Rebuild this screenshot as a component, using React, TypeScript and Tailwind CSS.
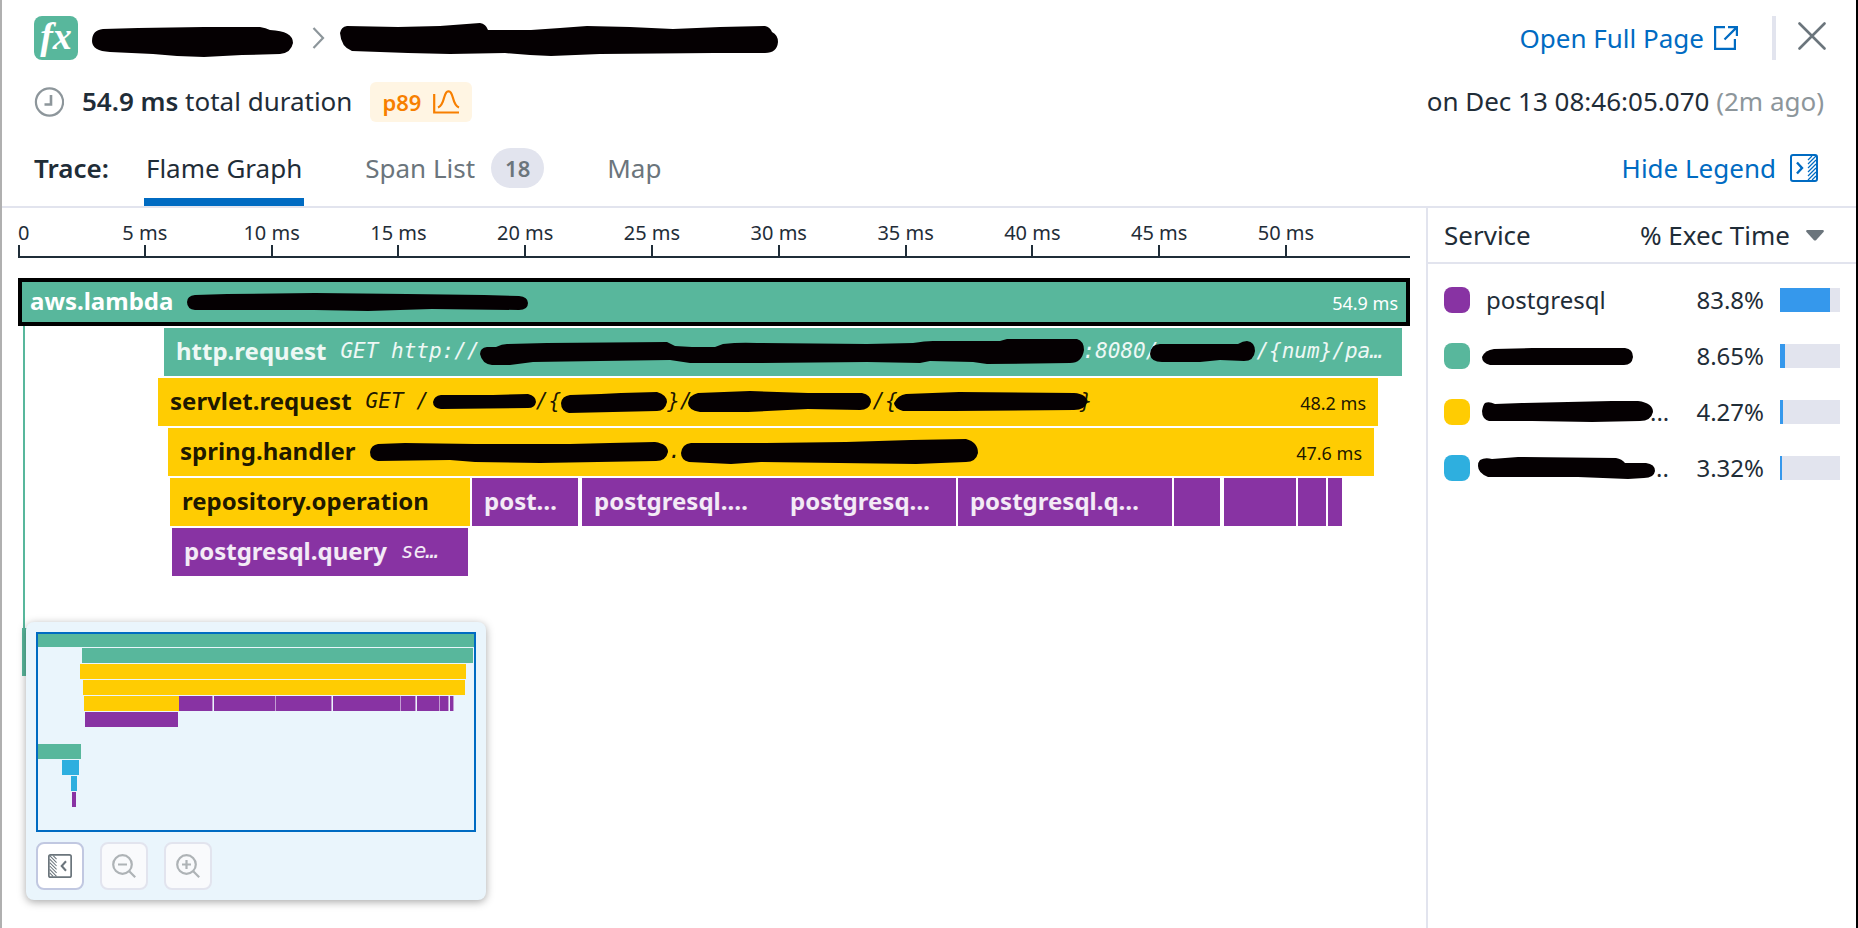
import { useState, type ReactNode } from "react";

type Color = "teal" | "yellow" | "purple" | "blue";

const FILL: Record<Color, string> = {
  teal: "bg-[#58b79c]",
  yellow: "bg-[#ffcc02]",
  purple: "bg-[#8833a3]",
  blue: "bg-[#2eafdf]",
};

// Text colour that stays readable on each bar
const INK: Record<Color, string> = {
  teal: "text-white/90",
  yellow: "text-black/90",
  purple: "text-white/90",
  blue: "text-white/90",
};

interface Span {
  start: number;
  end: number;
  color: Color;
  name?: string;
  detail?: ReactNode;
  duration?: string;
  selected?: boolean;
}

interface RedactionProps {
  width: number;
  height: number;
  d: string;
  className?: string;
}

function Redaction({ width, height, d, className = "" }: RedactionProps) {
  return (
    <svg
      width={width}
      height={height}
      viewBox={`0 0 ${width} ${height}`}
      className={`shrink-0 ${className}`}
      aria-hidden="true"
    >
      <path d={d} fill="#050002" />
    </svg>
  );
}

// Whole trace length in timeline units, 5 ms is STEP units
const TOTAL = 1392;
const STEP = 126.8;

const ROWS: Span[][] = [
  [
    {
      start: 0,
      end: 1392,
      color: "teal",
      name: "aws.lambda",
      duration: "54.9 ms",
      selected: true,
      detail: (
        <Redaction
          width={342}
          height={19}
          d="M8 2 L40 1 L128 0 L220 1 L297 2 L332 3 Q341 4 341 10 Q341 17 332 17 L245 16 L181 18 L127 17 L8 17 Q0 16 0 9 Q0 3 8 2Z"
        />
      ),
    },
  ],
  [
    {
      start: 146,
      end: 1384,
      color: "teal",
      name: "http.request",
      detail: (
        <>
          <span>GET http://</span>
          <Redaction
            className="-mr-1"
            width={607}
            height={27}
            d="M7 8 L16 8 Q22 5 27 5 L67 4 L187 3 L195 7 L212 8 L235 8 L243 5 Q260 3 277 4 L387 5 L433 4 Q445 2 453 2 L520 2 L527 0 L597 0 Q604 2 604 11 Q602 24 590 24 L507 25 L493 23 L450 22 L440 24 L387 23 L280 24 L210 24 L190 21 L120 22 L53 23 L30 26 L12 26 Q2 25 0 15 Q0 9 7 8Z"
          />
          <span>:8080/</span>
          <Redaction
            className="-ml-2"
            width={106}
            height={22}
            d="M10 3 L88 3 Q93 0 97 0 Q105 1 105 10 Q104 20 94 20 L70 19 L50 21 L12 21 Q1 21 0 13 Q1 3 10 3Z"
          />
          <span>/{"{num}"}/pa…</span>
        </>
      ),
    },
  ],
  [
    {
      start: 140,
      end: 1360,
      color: "yellow",
      name: "servlet.request",
      duration: "48.2 ms",
      detail: (
        <>
          <span>GET /</span>
          <Redaction
            className="ml-1"
            width={103}
            height={16}
            d="M8 1 L60 1 L95 0 Q103 2 103 8 Q102 14 95 14 L8 15 Q0 14 0 8 Q1 2 8 1Z"
          />
          <span>/{"{"}</span>
          <Redaction
            width={106}
            height={21}
            d="M9 3 L40 2 L60 1 L96 0 Q106 3 106 10 Q104 19 96 19 L8 21 Q0 19 0 11 Q1 4 9 3Z"
          />
          <span>{"}"}/</span>
          <Redaction
            className="-ml-1"
            width={184}
            height={22}
            d="M10 2 L62 0 L120 2 L174 2 Q183 4 183 11 Q181 19 172 19 L120 18 L60 21 L12 21 Q0 19 0 12 Q1 4 10 2Z"
          />
          <span>/{"{"}</span>
          <Redaction
            className="-ml-1"
            width={194}
            height={20}
            d="M12 2 L65 0 L180 1 Q193 2 193 10 Q191 18 180 18 L60 19 L9 19 Q0 16 0 11 Q4 3 12 2Z"
          />
          <span className="-ml-2">{"}"}</span>
        </>
      ),
    },
  ],
  [
    {
      start: 150,
      end: 1356,
      color: "yellow",
      name: "spring.handler",
      duration: "47.6 ms",
      detail: (
        <>
          <Redaction
            width={299}
            height={21}
            d="M8 2 L35 1 L105 2 L200 2 L240 1 L285 0 Q298 2 298 10 Q296 19 286 19 L170 21 L105 20 L80 18 L8 19 Q0 18 0 10 Q1 3 8 2Z"
          />
          <span>.</span>
          <Redaction
            width={298}
            height={26}
            d="M10 4 L85 4 L165 3 L230 1 L285 0 Q297 3 297 14 Q295 23 285 23 L235 25 L80 23 L50 25 L8 23 Q0 21 0 14 Q1 5 10 4Z"
          />
        </>
      ),
    },
  ],
  [
    { start: 152, end: 452, color: "yellow", name: "repository.operation" },
    { start: 454, end: 560, color: "purple", name: "post…" },
    { start: 564, end: 760, color: "purple", name: "postgresql.…" },
    { start: 760, end: 938, color: "purple", name: "postgresq…" },
    { start: 940, end: 1154, color: "purple", name: "postgresql.q…" },
    { start: 1156, end: 1202, color: "purple" },
    { start: 1206, end: 1278, color: "purple" },
    { start: 1280, end: 1308, color: "purple" },
    { start: 1310, end: 1324, color: "purple" },
  ],
  [
    {
      start: 154,
      end: 450,
      color: "purple",
      name: "postgresql.query",
      detail: <span>se…</span>,
    },
  ],
  [],
  [{ start: 4, end: 142, color: "teal" }],
  [{ start: 82, end: 136, color: "blue" }],
  [{ start: 112, end: 130, color: "blue" }],
  [{ start: 115, end: 125, color: "purple" }],
];

const TICKS = [0, 5, 10, 15, 20, 25, 30, 35, 40, 45, 50];

const SERVICES = [
  { color: "purple" as Color, share: "83.8%", value: 83.8, name: <span>postgresql</span> },
  {
    color: "teal" as Color,
    share: "8.65%",
    value: 8.65,
    name: (
      <Redaction
        className="-ml-1"
        width={152}
        height={19}
        d="M12 2 L50 1 L143 1 Q151 2 151 10 Q150 18 142 18 L8 18 Q0 16 0 10 Q3 3 12 2Z"
      />
    ),
  },
  {
    color: "yellow" as Color,
    share: "4.27%",
    value: 4.27,
    name: (
      <>
        <Redaction
          className="-ml-1"
          width={172}
          height={22}
          d="M3 2 Q7 0 13 3 L40 2 L130 0 L156 0 Q171 2 171 11 Q169 20 158 20 L110 21 L50 20 L7 20 Q0 18 0 10 Q1 4 3 2Z"
        />
        <span className="-ml-1">...</span>
      </>
    ),
  },
  {
    color: "blue" as Color,
    share: "3.32%",
    value: 3.32,
    name: (
      <>
        <Redaction
          className="-ml-2"
          width={178}
          height={23}
          d="M2 3 Q7 0 14 2 L40 0 L138 1 Q144 2 147 6 L168 6 Q177 7 177 14 Q176 21 166 21 L150 22 L100 20 L10 20 Q0 16 0 9 Q0 5 2 3Z"
        />
        <span>..</span>
      </>
    ),
  },
];

function percent(units: number) {
  return `${(units / TOTAL) * 100}%`;
}

function PanelIcon({ side, size }: { side: "left" | "right"; size: number }) {
  const flip = side === "left" ? "scale(-1 1) translate(-28 0)" : undefined;
  return (
    <svg width={size} height={size} viewBox="0 0 28 28" fill="none" stroke="currentColor" aria-hidden="true">
      <g transform={flip}>
        <rect x="1" y="1" width="26" height="26" rx="2" strokeWidth="2" />
        <path d="M7 8.5 L12 14 L7 19.5" strokeWidth="2.4" />
        <path
          d="M18 6 L22 2 M18 10 L26 2 M18 14 L26 6 M18 18 L26 10 M18 22 L26 14 M18 26 L26 18 M22 26 L26 22"
          strokeWidth="1.2"
        />
      </g>
    </svg>
  );
}

function ZoomIcon({ plus = false }: { plus?: boolean }) {
  return (
    <svg width="24" height="24" viewBox="0 0 24 24" fill="none" stroke="currentColor" strokeWidth="2.2" aria-hidden="true">
      <circle cx="10.5" cy="10.5" r="9.3" />
      <path d="M17 17 L23.2 23.2 M6 10.5 H15" />
      {plus && <path d="M10.5 6 V15" />}
    </svg>
  );
}

function SpanRow({ spans }: { spans: Span[] }) {
  return (
    <div className="flex h-12">
      {spans.map((span, idx) => (
        <div
          key={span.start}
          className={`flex shrink-0 items-center overflow-hidden whitespace-nowrap ${FILL[span.color]} ${
            span.selected ? "border-4 border-black text-white" : INK[span.color]
          } ${span.selected ? "px-2" : span.name ? "px-3" : ""}`}
          style={{
            marginLeft: percent(span.start - (idx > 0 ? spans[idx - 1].end : 0)),
            width: percent(span.end - span.start),
          }}
        >
          {span.name && <span className="pb-[2px] text-2xl font-bold">{span.name}</span>}
          {span.detail && (
            <span className="ml-[14px] flex items-center font-['DejaVu_Sans_Mono',monospace] text-[21px] italic">
              {span.detail}
            </span>
          )}
          {span.duration && <span className="ml-auto pt-[2px] text-lg">{span.duration}</span>}
        </div>
      ))}
    </div>
  );
}

function Minimap() {
  return (
    <div className="absolute bottom-7 left-6 w-[460px] rounded-lg bg-[#eaf5fc] p-[10px] shadow-[0_2px_8px_rgba(0,0,0,0.35)]">
      <div className="relative flex h-[200px] flex-col gap-px overflow-hidden">
        {ROWS.map((spans, row) => (
          <div key={row} className="flex h-[15px] shrink-0">
            {spans.map((span, idx) => (
              <div
                key={span.start}
                className={`shrink-0 ${FILL[span.color]} ${
                  idx > 0 ? "border-r border-[#c39dd3]" : ""
                }`}
                style={{
                  marginLeft: percent(span.start - (idx > 0 ? spans[idx - 1].end : 0)),
                  width: percent(span.end - span.start),
                }}
              />
            ))}
          </div>
        ))}
        <div className="absolute inset-0 border-2 border-[#006bc2]" />
      </div>
      <div className="mt-[10px] flex gap-4">
        <button
          type="button"
          aria-label="Collapse minimap"
          className="flex size-12 items-center justify-center rounded-lg border-2 border-[#c1c8e1] bg-white text-[#6b757c]"
        >
          <PanelIcon side="left" size={24} />
        </button>
        <button
          type="button"
          disabled
          aria-label="Zoom out"
          className="flex size-12 items-center justify-center rounded-lg border-2 border-[#e2e4ee] bg-[#f9fafc] text-[#aeb3b6]"
        >
          <ZoomIcon />
        </button>
        <button
          type="button"
          disabled
          aria-label="Zoom in"
          className="flex size-12 items-center justify-center rounded-lg border-2 border-[#e2e4ee] bg-[#f9fafc] text-[#aeb3b6]"
        >
          <ZoomIcon plus />
        </button>
      </div>
    </div>
  );
}

function FlameGraph() {
  return (
    <section className="relative min-w-0 flex-1 overflow-hidden px-4">
      {/* Time axis */}
      <div className="flex h-[50px] items-end overflow-hidden border-b-2 border-[#1f2d38] text-xl text-[#1f2d38]">
        {TICKS.map((ms) => (
          <div
            key={ms}
            className={`flex shrink-0 flex-col ${ms === 0 ? "items-start" : "items-center"}`}
            style={{
              width: percent(ms === 0 ? STEP / 2 : STEP),
            }}
          >
            <span className="leading-6">{ms === 0 ? "0" : `${ms} ms`}</span>
            <span className="h-[11px] w-[2px] bg-[#1f2d38]" />
          </div>
        ))}
      </div>

      {/* Spans, one row per depth */}
      <div className="relative mt-5 flex flex-col gap-[2px]">
        <div className="absolute top-12 left-[5px] h-[302px] w-[2px] bg-[#58b79c]" />
        {ROWS.map((spans, row) => (
          <SpanRow key={row} spans={spans} />
        ))}
      </div>

      <Minimap />
    </section>
  );
}

function Legend() {
  return (
    <aside className="w-[430px] shrink-0 border-l-2 border-[#e2e4ee]">
      <table className="w-full table-fixed border-collapse">
        <colgroup>
          <col className="w-[200px]" />
          <col />
          <col className="w-24" />
          <col className="w-[92px]" />
        </colgroup>
        <thead>
          <tr className="h-[55px] border-b-2 border-[#e2e4ee] text-[26px]">
            <th className="pl-4 text-left font-normal">Service</th>
            <th colSpan={3} className="pr-8 font-normal">
              <button type="button" className="ml-auto flex items-center gap-4 whitespace-nowrap">
                % Exec Time
                <svg width="18" height="11" viewBox="0 0 18 11" aria-hidden="true">
                  <path d="M1 0 H17 Q18.5 .5 17.5 2 L10 10.2 Q9 11 8 10.2 L.5 2 Q-.5 .5 1 0Z" fill="#6b757c" />
                </svg>
              </button>
            </th>
          </tr>
        </thead>
        <tbody className="text-2xl before:block before:h-2 before:content-['']">
          {SERVICES.map((service) => (
            <tr key={service.share} className="h-14">
              <td colSpan={2} className="pl-4">
                <div className="flex items-center">
                  <span className={`mr-4 size-[26px] shrink-0 rounded-lg ${FILL[service.color]}`} />
                  {service.name}
                </div>
              </td>
              <td className="text-right">{service.share}</td>
              <td className="px-4">
                <div className="h-6 w-full bg-[#e2e4ee]">
                  <div className="h-full bg-[#3598ec]" style={{ width: `${service.value}%` }} />
                </div>
              </td>
            </tr>
          ))}
        </tbody>
      </table>
    </aside>
  );
}

export default function App() {
  const [tab, setTab] = useState("flame");
  const [showLegend, setShowLegend] = useState(true);

  const tabClass = (id: string) =>
    `flex items-center gap-4 border-b-8 px-[2px] ${
      tab === id ? "border-[#006bc2] text-[#1f2d38]" : "border-transparent text-[#6b757c]"
    }`;

  return (
    <div className="flex min-h-screen flex-col border-r-2 border-l-2 border-r-black border-l-[#b0b0b0] bg-white font-['Noto_Sans',sans-serif] text-[#1f2d38]">
      <header className="border-b-2 border-[#e2e4ee] pt-4 text-[26px]">
        <div className="flex h-11 items-center pr-[30px] pl-8">
          <span className="flex size-11 items-center justify-center rounded-lg bg-[#58b79c] pb-1 font-['Liberation_Serif',serif] text-[38px] leading-none font-bold text-white italic">
            fx
          </span>
          <Redaction
            className="mt-2 ml-[14px]"
            width={202}
            height={32}
            d="M11 3 L46 2 L112 1 L168 1 Q174 2 178 4 Q201 5 201 17 Q199 27 188 28 L150 29 L112 31 L85 30 L61 28 L18 26 Q0 25 0 15 Q0 4 11 3Z"
          />
          <svg width="13" height="22" viewBox="0 0 13 22" fill="none" className="ml-[18px]" aria-hidden="true">
            <path d="M1.5 1 L11 11 L1.5 21" stroke="#8d969b" strokeWidth="2.2" />
          </svg>
          <Redaction
            className="mt-1 ml-[15px]"
            width={439}
            height={34}
            d="M7 3 L58 4 L100 3 L140 0 Q146 1 148 7 L191 7 L220 5 L247 3 L290 4 L333 6 L380 4 L425 3 Q430 4 432 9 Q438 12 438 19 Q437 30 425 30 L374 30 L260 31 L211 33 L190 32 L165 30 L110 31 L68 30 L12 28 Q1 24 0 10 Q1 4 7 3Z"
          />
          <a href="#full" className="ml-auto flex items-center gap-[10px] text-[#006bc2]">
            Open Full Page
            <svg width="24" height="24" viewBox="0 0 24 24" fill="none" stroke="currentColor" strokeWidth="2.2" aria-hidden="true">
              <path d="M11 1.1 H1.1 V22.9 H20.9 V13" />
              <path d="M14 1.1 H22.9 V10 M22.9 1.1 L10.5 13.5" />
            </svg>
          </a>
          <span className="ml-[34px] h-11 w-1 bg-[#e2e4ee]" />
          <button type="button" aria-label="Close" className="mb-1 ml-[22px] text-[#6b757c]">
            <svg width="28" height="28" viewBox="0 0 28 28" fill="none" stroke="currentColor" strokeWidth="2.6" strokeLinecap="round" aria-hidden="true">
              <path d="M1.5 1.5 L26.5 26.5 M26.5 1.5 L1.5 26.5" />
            </svg>
          </button>
        </div>

        <div className="mt-[22px] flex h-10 items-center pr-8 pl-8">
          <svg width="30" height="30" viewBox="0 0 30 30" fill="none" stroke="#8d969b" aria-hidden="true">
            <circle cx="15.5" cy="15" r="13.6" strokeWidth="2.2" />
            <path d="M17 8 V17.5 H10.5" strokeWidth="2.6" />
          </svg>
          <span className="ml-[18px] pb-[2px]">
            <span className="font-semibold">54.9 ms</span> total duration
          </span>
          <span className="ml-[18px] flex h-10 items-center gap-3 rounded-md bg-[#fff5e3] px-3 text-[22px] font-semibold text-[#f77f00]">
            p89
            <svg width="27" height="24" viewBox="0 0 27 24" fill="none" stroke="currentColor" strokeWidth="2.2" aria-hidden="true">
              <path d="M1.2 4 V22.5 H26" />
              <path d="M5 17.5 Q9 16 11 8 Q13 1 15.5 1.5 Q18 1 20 8 Q22 16 26 17.5" />
            </svg>
          </span>
          <time className="ml-auto pb-[2px]">
            on Dec 13 08:46:05.070 <span className="text-[#8d969b]">(2m ago)</span>
          </time>
        </div>

        <div className="mt-4 flex h-[68px] pr-[38px] pl-8">
          <span className="flex items-center border-b-8 border-transparent font-semibold">Trace:</span>
          <nav className="ml-[35px] flex gap-[59px]">
            <button type="button" className={tabClass("flame")} onClick={() => setTab("flame")}>
              Flame Graph
            </button>
            <button type="button" className={tabClass("list")} onClick={() => setTab("list")}>
              Span List
              <span className="flex h-10 items-center rounded-full bg-[#e2e4ee] px-[14px] text-[22px] font-semibold">
                18
              </span>
            </button>
            <button type="button" className={tabClass("map")} onClick={() => setTab("map")}>
              Map
            </button>
          </nav>
          <button
            type="button"
            className="ml-auto flex items-center gap-[14px] border-b-8 border-transparent text-[#006bc2]"
            onClick={() => setShowLegend(!showLegend)}
          >
            {showLegend ? "Hide Legend" : "Show Legend"}
            <PanelIcon side="right" size={28} />
          </button>
        </div>
      </header>

      <main className="flex flex-1">
        <FlameGraph />
        {showLegend && <Legend />}
      </main>
    </div>
  );
}
